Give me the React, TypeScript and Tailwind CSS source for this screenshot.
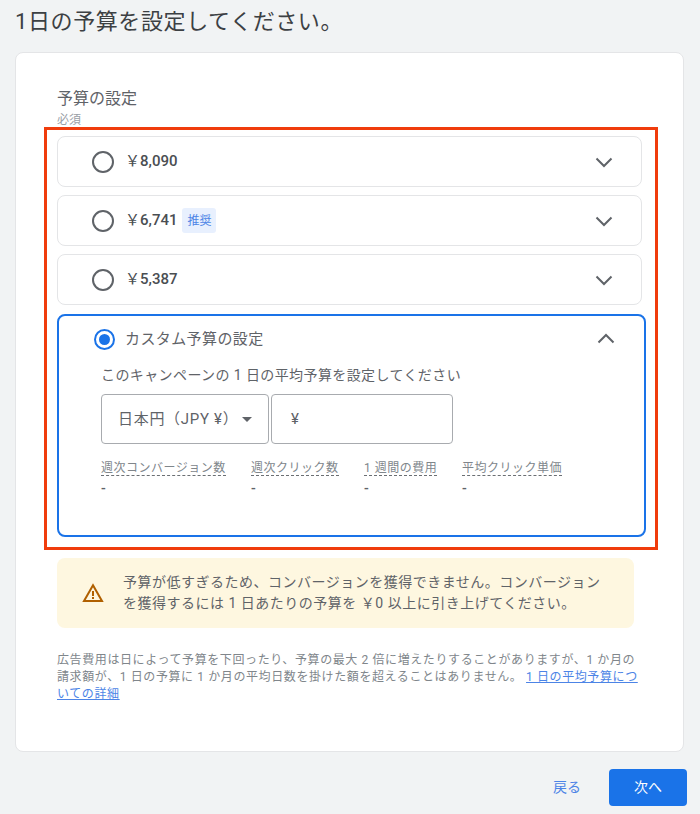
import React from "react";

function Chevron({ up = false }: { up?: boolean }) {
  return (
    <svg width="24" height="24" viewBox="0 0 24 24" fill="none" className="block">
      <path
        d={up ? "M4.5 15.5 12 8l7.5 7.5" : "M4.5 8.5 12 16l7.5-7.5"}
        stroke="#5f6368"
        strokeWidth="2"
      />
    </svg>
  );
}

function Row({ price, badge, mb }: { price: string; badge?: boolean; mb: string }) {
  return (
    <div className={`flex h-[51px] w-[585px] items-center rounded-lg border border-[#e4e5e7] bg-white pl-[34px] pr-[25px] ${mb}`}>
      <span className="h-[22px] w-[22px] rounded-full border-2 border-[#5f6368]" />
      <span className="ml-[11px] text-[15px] font-medium text-[#4a4e52]">
        <span className="font-normal">￥</span>
        {price}
      </span>
      {badge && (
        <span className="ml-[5px] flex h-[25px] w-[34px] items-center justify-center rounded-[3px] bg-[#e8f0fe] text-[12px] text-[#4c84e6]">
          推奨
        </span>
      )}
      <span className="ml-auto">
        <Chevron />
      </span>
    </div>
  );
}

function Metric({ label, width }: { label: string; width: string }) {
  return (
    <div className={width}>
      <div className="w-fit border-b border-dashed border-[#6b6f73] text-[12px] leading-[14px] tracking-[0.5px] text-[#80868b]">{label}</div>
      <div className="mt-[4px] text-[14px] font-medium leading-[16px] text-[#5f6368]">-</div>
    </div>
  );
}

export default function App() {
  return (
    <div className="h-[814px] w-[700px] overflow-hidden bg-[#f1f3f4] font-['Roboto','Noto_Sans_CJK_JP',sans-serif]">
      <h1 className="pl-[15px] pt-[8px] text-[22px] font-normal leading-[28px] tracking-[0.6px] text-[#3c4043]">
        1日の予算を設定してください。
      </h1>
      <div className="ml-[15px] mt-[16px] h-[700px] w-[669px] rounded-lg border border-[#e4e5e7] bg-white pl-[28px] pt-[35px]">
        <div className="ml-[13px] text-[16px] leading-[22px] text-[#5f6368]">予算の設定</div>
        <div className="ml-[13px] mt-[3px] text-[12px] leading-[14px] text-[#9aa0a6]">必須</div>
        <div className="h-[423px] w-[614px] border-[3px] border-[#f03c0c] pl-[10px] pt-[6px]">
          <Row price="8,090" mb="mb-[8px]" />
          <Row price="6,741" badge mb="mb-[8px]" />
          <Row price="5,387" mb="mb-[9px]" />
          <div className="h-[223px] w-[589px] rounded-lg border-2 border-[#1a73e8] bg-white pt-[11px]">
            <div className="flex items-center pl-[35px] pr-[26px]">
              <span className="flex h-[21px] w-[21px] items-center justify-center rounded-full border-2 border-[#1a73e8]">
                <span className="h-[11px] w-[11px] rounded-full bg-[#1a73e8]" />
              </span>
              <span className="ml-[10px] text-[15px] tracking-[0.4px] text-[#5f6368]">カスタム予算の設定</span>
              <span className="ml-auto">
                <Chevron up />
              </span>
            </div>
            <div className="ml-[42px] mt-[15px] text-[14px] leading-[18px] tracking-[0.4px] text-[#5f6368]">
              このキャンペーンの 1 日の平均予算を設定してください
            </div>
            <div className="ml-[42px] mt-[10px] flex gap-[2px]">
              <div className="flex h-[50px] w-[168px] items-center rounded border border-[#a8abaf] pl-[16px] text-[15px] tracking-[0.7px] text-[#5f6368]">
                <span>日本円（JPY ¥）</span>
                <span className="ml-[4px] h-0 w-0 border-x-[5px] border-t-[5px] border-x-transparent border-t-[#5f6368]" />
              </div>
              <div className="flex h-[50px] w-[182px] items-center rounded border border-[#a8abaf] pl-[19px] text-[15px] text-[#5f6368]">
                ¥
              </div>
            </div>
            <div className="ml-[42px] mt-[17px] flex">
              <Metric label="週次コンバージョン数" width="w-[150px]" />
              <Metric label="週次クリック数" width="w-[113px]" />
              <Metric label="1 週間の費用" width="w-[98px]" />
              <Metric label="平均クリック単価" width="w-[110px]" />
            </div>
          </div>
        </div>
        <div className="ml-[13px] mt-[8px] flex h-[70px] w-[577px] items-center rounded-lg bg-[#fef7e0] pl-[25px]">
          <svg width="22" height="20" viewBox="0 0 22 20" fill="none" className="shrink-0">
            <path d="M11 2.2 20 18H2L11 2.2Z" stroke="#b06000" strokeWidth="2" />
            <path d="M10 8h2v5h-2zM10 14h2v2h-2z" fill="#b06000" />
          </svg>
          <p className="ml-[19px] w-[484px] text-[14px] leading-[21px] tracking-[0.5px] text-[#5f6368]">
            予算が低すぎるため、コンバージョンを獲得できません。コンバージョンを獲得するには 1 日あたりの予算を ￥0 以上に引き上げてください。
          </p>
        </div>
        <p className="ml-[13px] mt-[24px] w-[585px] text-[12px] leading-[17px] tracking-[0.6px] text-[#80868b]">
          広告費用は日によって予算を下回ったり、予算の最大 2 倍に増えたりすることがありますが、1 か月の請求額が、1 日の予算に 1 か月の平均日数を掛けた額を超えることはありません。{" "}
          <span className="text-[#4c84e6] underline">1 日の平均予算についての詳細</span>
        </p>
      </div>
      <div className="mt-[17px] flex items-center justify-end pr-[13px]">
        <span className="mr-[28px] text-[14px] text-[#4c84e6]">戻る</span>
        <button className="h-[37px] w-[78px] rounded bg-[#1a73e8] text-[14px] text-white">次へ</button>
      </div>
    </div>
  );
}
